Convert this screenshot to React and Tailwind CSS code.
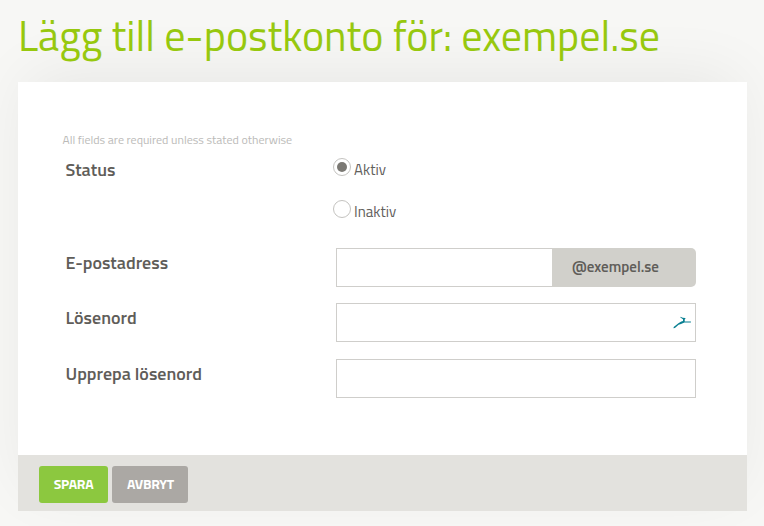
const Label = ({ children, className }) => (
  <span className={`-ml-[0.5px] block w-[270.5px] shrink-0 whitespace-nowrap text-[18px] font-semibold leading-6 text-[#5f5d59] ${className}`}>{children}</span>
);

const Radio = ({ label, checked }) => (
  <label className="flex h-[18px] items-center gap-[3px]">
    <span className="flex size-[18px] shrink-0 items-center justify-center rounded-full border border-[#c4c3c0] bg-white">
      {checked && <span className="size-[10px] rounded-full bg-[#7b7974]" />}
    </span>
    <span className="mt-[5px] text-[15px] leading-[18px] text-[#62605c]">{label}</span>
  </label>
);

export default function App() {
  return (
    <div className="h-[526px] w-[764px] overflow-hidden bg-[#f7f7f5] pl-[18px] pt-[11px] font-['Titillium_Web','Roboto',sans-serif]">
      <h1 className="relative z-10 h-[71px] whitespace-nowrap text-[42px] font-normal leading-[48px] text-[#97c80e]">Lägg till e-postkonto för: exempel.se</h1>
      <form className="w-[729px] shadow-[0_-15px_60px_-10px_rgba(0,0,0,0.07)]">
        <div className="flex h-[373px] flex-col bg-white pl-[48px] pt-[50px]">
          <p className="-ml-[3.5px] h-[26px] whitespace-nowrap text-[12px] leading-4 text-[#bbbab8]">All fields are required unless stated otherwise</p>
          <div className="flex h-[90px]">
            <Label>Status</Label>
            <div className="-ml-[3px] flex flex-col gap-6">
              <Radio label="Aktiv" checked />
              <Radio label="Inaktiv" />
            </div>
          </div>
          <div className="flex h-[55px]">
            <Label className="pt-[3px]">E-postadress</Label>
            <div className="flex h-[39px] w-[360px]">
              <input className="w-[216px] border border-r-0 border-[#cfcecb] bg-white outline-none" />
              <span className="flex-1 rounded-r-[5px] bg-[#d1d0cb] pl-[20px] text-[15px] font-semibold leading-[37px] text-[#5f5d59]">@exempel.se</span>
            </div>
          </div>
          <div className="flex h-[56px]">
            <Label className="pt-[3px]">Lösenord</Label>
            <div className="flex h-[39px] w-[360px] items-center border border-[#cfcecb] pr-[4px]">
              <input type="password" className="h-full min-w-0 flex-1 bg-transparent outline-none" />
              <svg width="18" height="14" viewBox="0 0 18 14" fill="#087f91">
                <path d="M7.4.7l2.3 1 2.5.2.3.8-.8.8v1.9h6.2v1h-6.5L8 7.9l-2.4.9L1.9 12l-1.4.2.2-1.1 4.7-3.8 2.9-1.7L10 5V3.2L7.4 1.6z" />
              </svg>
            </div>
          </div>
          <div className="flex h-[40px]">
            <Label className="pt-[3px]">Upprepa lösenord</Label>
            <input type="password" className="h-[39px] w-[360px] border border-[#cfcecb] outline-none" />
          </div>
        </div>
        <div className="flex h-[56px] gap-1 bg-[#e3e2de] pl-[21px] pt-[11px]">
          <button type="button" className="h-[37px] w-[69px] rounded-[3px] bg-[#8cc83f] pb-[2px] text-[14px] font-bold tracking-[-0.3px] text-white">SPARA</button>
          <button type="button" className="h-[37px] w-[76px] rounded-[3px] bg-[#aba8a4] pb-[2px] pl-[1px] text-[14px] font-bold tracking-[-0.3px] text-white">AVBRYT</button>
        </div>
      </form>
    </div>
  );
}
